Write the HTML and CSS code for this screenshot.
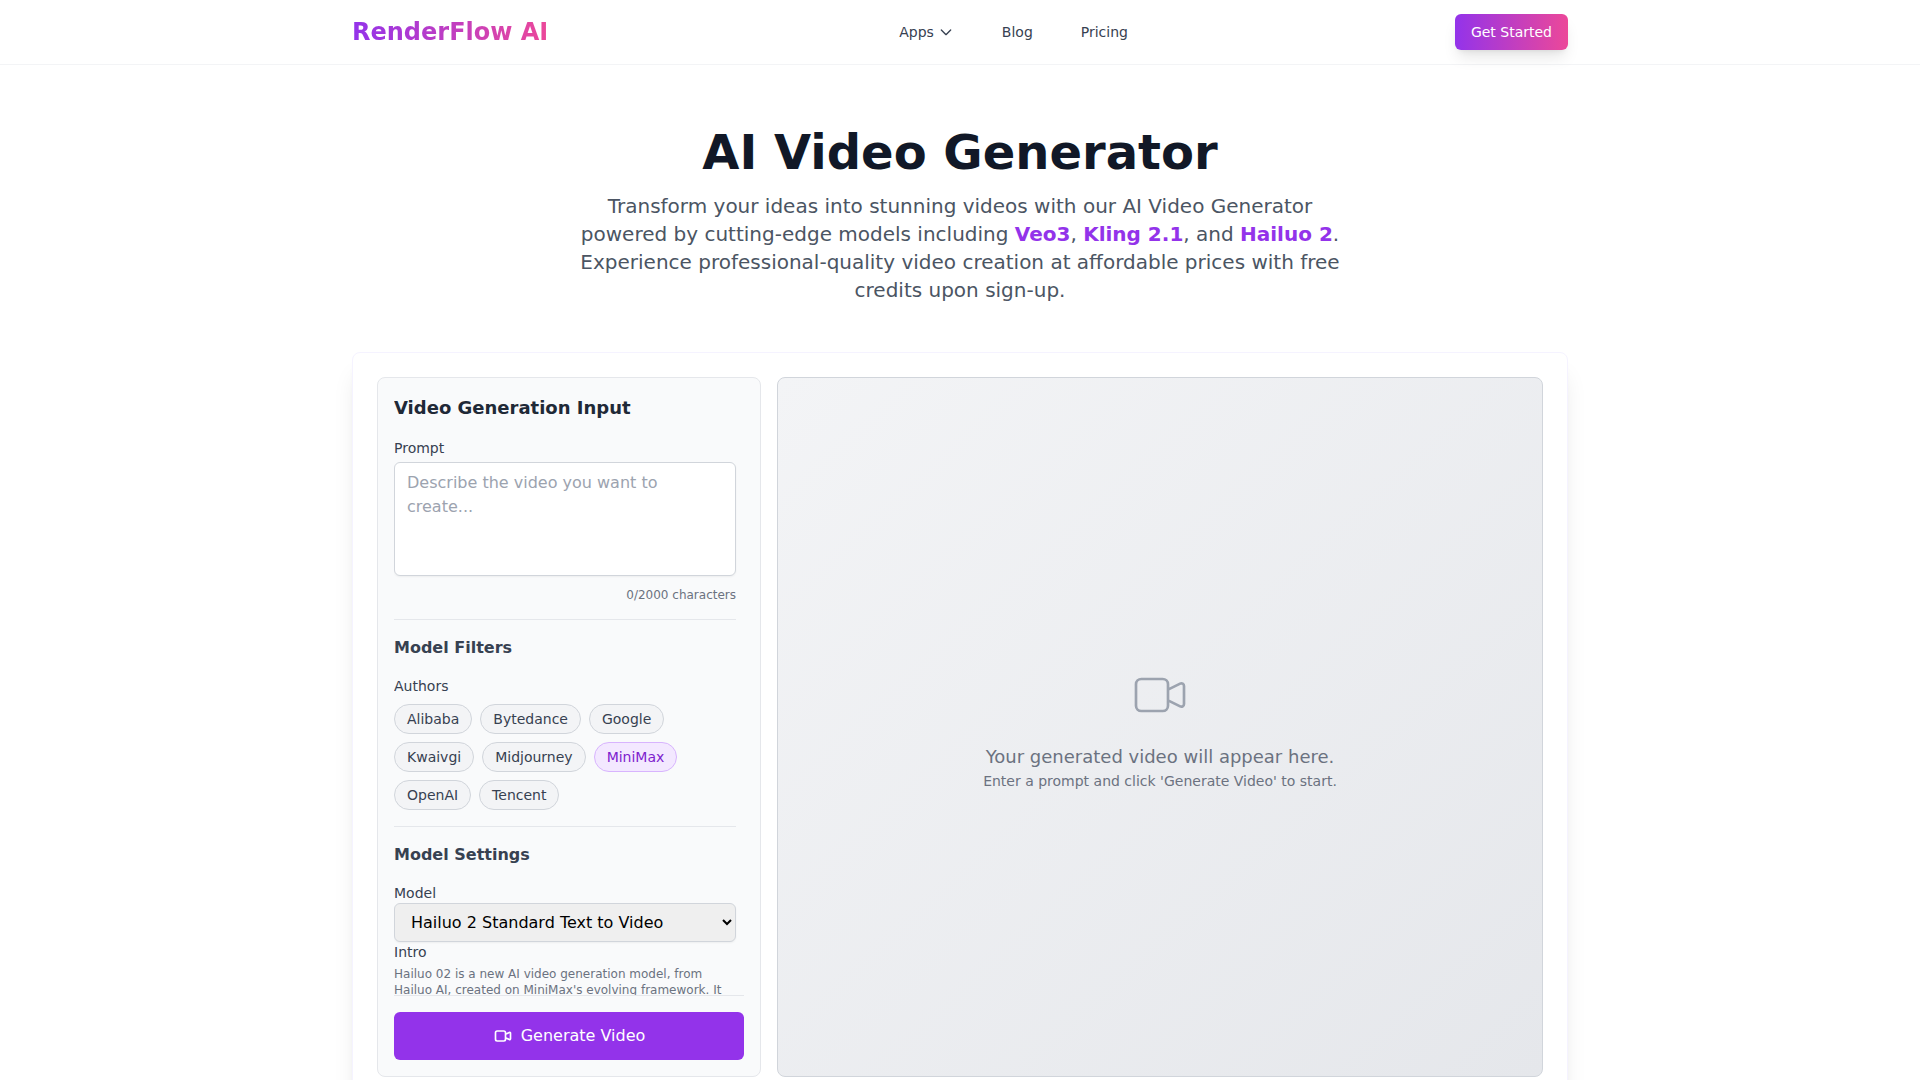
FILE: index.html
```html
<!DOCTYPE html>
<html lang="en">
<head>
  <meta charset="utf-8">
  <meta name="viewport" content="width=device-width, initial-scale=1">
  <title>AI Video Generator | RenderFlow AI</title>
  <link rel="stylesheet" href="styles.css">
</head>
<body>
  <header class="site-header">
    <div class="container site-header-row">
      <a class="logo" href="#">RenderFlow AI</a>
      <nav class="nav" aria-label="Main">
        <button class="nav-link nav-toggle" type="button">
          Apps
          <svg class="icon-sm" viewBox="0 0 24 24" aria-hidden="true"><path d="M19 9l-7 7-7-7"/></svg>
        </button>
        <a class="nav-link" href="#">Blog</a>
        <a class="nav-link" href="#">Pricing</a>
      </nav>
      <button class="get-started" type="button">Get Started</button>
    </div>
  </header>

  <main class="container page">
    <section class="hero">
      <h1 class="hero-title">AI Video Generator</h1>
      <p class="hero-text">Transform your ideas into stunning videos with our AI Video Generator powered by cutting-edge models including <strong>Veo3</strong>, <strong>Kling 2.1</strong>, and <strong>Hailuo 2</strong>. Experience professional-quality video creation at affordable prices with free credits upon sign-up.</p>
    </section>

    <section class="workspace">
      <form class="panel">
        <div class="panel-scroll">
          <h2 class="panel-title">Video Generation Input</h2>
          <label class="label label-spaced" for="prompt">Prompt</label>
          <textarea class="prompt" id="prompt" rows="4" maxlength="2000" placeholder="Describe the video you want to create..."></textarea>
          <p class="counter">0/2000 characters</p>

          <section class="group">
            <h3 class="group-title">Model Filters</h3>
            <p class="label" id="authors">Authors</p>
            <div class="chips" role="group" aria-labelledby="authors">
              <button class="chip" type="button">Alibaba</button>
              <button class="chip" type="button">Bytedance</button>
              <button class="chip" type="button">Google</button>
              <button class="chip" type="button">Kwaivgi</button>
              <button class="chip" type="button">Midjourney</button>
              <button class="chip chip-active" type="button" aria-pressed="true">MiniMax</button>
              <button class="chip" type="button">OpenAI</button>
              <button class="chip" type="button">Tencent</button>
            </div>
          </section>

          <section class="group">
            <h3 class="group-title">Model Settings</h3>
            <label class="label" for="model">Model</label>
            <select class="model" id="model">
              <option>Hailuo 2 Standard Text to Video</option>
            </select>
            <p class="label label-spaced">Intro</p>
            <p class="intro">Hailuo 02 is a new AI video generation model, from Hailuo AI, created on MiniMax's evolving framework. It</p>
          </section>
        </div>
        <div class="panel-footer">
          <button class="generate" type="submit">
            <svg class="icon-md" viewBox="0 0 24 24" aria-hidden="true"><path d="M15 10l4.553-2.276A1 1 0 0121 8.618v6.764a1 1 0 01-1.447.894L15 14M5 18h8a2 2 0 002-2V8a2 2 0 00-2-2H5a2 2 0 00-2 2v8a2 2 0 002 2z"/></svg>
            Generate Video
          </button>
        </div>
      </form>

      <div class="preview">
        <svg class="icon-lg" viewBox="0 0 24 24" aria-hidden="true"><path d="M15 10l4.553-2.276A1 1 0 0121 8.618v6.764a1 1 0 01-1.447.894L15 14M5 18h8a2 2 0 002-2V8a2 2 0 00-2-2H5a2 2 0 00-2 2v8a2 2 0 002 2z"/></svg>
        <p class="preview-title">Your generated video will appear here.</p>
        <p class="preview-text">Enter a prompt and click 'Generate Video' to start.</p>
      </div>
    </section>
  </main>
</body>
</html>
```
FILE: styles.css
```css
*,
*::before,
*::after {
  box-sizing: border-box;
}

body,
h1,
h2,
h3,
p {
  margin: 0;
}

body {
  background: #fff;
  color: #111827;
  font: 16px/24px "DejaVu Sans", sans-serif;
}

button,
select,
textarea {
  margin: 0;
  font: inherit;
}

button {
  cursor: pointer;
}

svg {
  flex: none;
  fill: none;
  stroke: currentColor;
  stroke-width: 2;
  stroke-linecap: round;
  stroke-linejoin: round;
}

.icon-sm {
  width: 16px;
  height: 16px;
}

.icon-md {
  width: 20px;
  height: 20px;
}

.icon-lg {
  width: 64px;
  height: 64px;
  margin-bottom: 16px;
  color: #9ca3af;
  stroke-width: 1;
}

.container {
  max-width: 1280px;
  margin: 0 auto;
  padding: 0 32px;
}

/* Header */
.site-header {
  box-shadow: 0 1px #f3f4f6;
}

.site-header-row {
  display: flex;
  align-items: center;
  justify-content: space-between;
  min-height: 64px;
}

.logo {
  background: linear-gradient(to right, #9333ea, #ec4899);
  background-clip: text;
  -webkit-background-clip: text;
  color: transparent;
  font-size: 24px;
  font-weight: 700;
  line-height: 32px;
  text-decoration: none;
}

.nav {
  display: flex;
  align-items: center;
  gap: 48px;
  padding-left: 24px;
}

.nav-link {
  color: #374151;
  font-size: 14px;
  line-height: 20px;
  text-decoration: none;
}

.nav-toggle {
  display: flex;
  align-items: center;
  gap: 4px;
  padding: 0;
  border: 0;
  background: none;
}

.get-started {
  padding: 8px 16px;
  border: 0;
  border-radius: 6px;
  background: linear-gradient(to right, #9333ea, #ec4899);
  box-shadow: 0 10px 15px -3px rgb(0 0 0 / 0.1), 0 4px 6px -4px rgb(0 0 0 / 0.1);
  color: #fff;
  font-size: 14px;
  line-height: 20px;
}

/* Hero */
.page {
  padding-top: 64px;
  padding-bottom: 64px;
}

.hero {
  margin-bottom: 48px;
  text-align: center;
}

.hero-title {
  margin-bottom: 16px;
  font-size: 48px;
  font-weight: 700;
  line-height: 48px;
}

.hero-text {
  max-width: 768px;
  margin: 0 auto;
  color: #4b5563;
  font-size: 20px;
  line-height: 28px;
}

.hero-text strong {
  color: #9333ea;
}

/* Generator */
.workspace {
  display: grid;
  grid-template-columns: 384px 1fr;
  grid-auto-rows: 700px;
  gap: 16px;
  padding: 24px;
  border: 1px solid #f5f3ff;
  border-radius: 8px;
  background: #fff;
  box-shadow: 0 20px 25px -5px rgb(0 0 0 / 0.1), 0 8px 10px -6px rgb(0 0 0 / 0.1);
}

.panel {
  display: flex;
  flex-direction: column;
  min-width: 0;
  padding: 16px;
  border: 1px solid #e5e7eb;
  border-radius: 8px;
  background: #f9fafb;
}

.panel-scroll {
  flex: 1;
  min-height: 0;
  padding-right: 8px;
  overflow-y: auto;
  scrollbar-width: none;
}

.panel-title {
  margin-bottom: 16px;
  color: #1f2937;
  font-size: 18px;
  line-height: 28px;
}

.label {
  display: block;
  color: #374151;
  font-size: 14px;
  line-height: 20px;
}

.label-spaced {
  margin-bottom: 4px;
}

.prompt {
  display: block;
  width: 100%;
  padding: 8px 12px;
  border: 1px solid #d1d5db;
  border-radius: 6px;
  background: #fff;
  box-shadow: 0 1px 2px rgb(0 0 0 / 0.05);
  resize: none;
}

.prompt::placeholder {
  color: #9ca3af;
}

.counter {
  margin: 11px 0 16px;
  color: #6b7280;
  font-size: 12px;
  line-height: 16px;
  text-align: right;
}

.group {
  padding: 16px 0;
  border-top: 1px solid #e5e7eb;
}

.group-title {
  margin-bottom: 16px;
  color: #374151;
  font-size: 16px;
  line-height: 24px;
}

.chips {
  display: flex;
  flex-wrap: wrap;
  gap: 8px;
  margin-top: 8px;
}

.chip {
  padding: 4px 12px;
  border: 1px solid #d1d5db;
  border-radius: 15px;
  background: #f3f4f6;
  color: #374151;
  font-size: 14px;
  line-height: 20px;
}

.chip-active {
  border-color: #d8b4fe;
  background: #f3e8ff;
  color: #7e22ce;
}

.model {
  display: block;
  width: 100%;
  padding: 8px 12px;
  border: 1px solid #d1d5db;
  border-radius: 6px;
  background-color: #efefef;
  box-shadow: 0 1px 2px rgb(0 0 0 / 0.05);
  color: #000;
}

.intro {
  color: #6b7280;
  font-size: 12px;
  line-height: 16px;
}

.panel-footer {
  padding-top: 16px;
  border-top: 1px solid #e5e7eb;
}

.generate {
  display: flex;
  align-items: center;
  justify-content: center;
  gap: 8px;
  width: 100%;
  padding: 12px 16px;
  border: 0;
  border-radius: 6px;
  background: #9333ea;
  color: #fff;
}

.preview {
  display: flex;
  flex-direction: column;
  align-items: center;
  justify-content: center;
  min-width: 0;
  border: 1px solid #d1d5db;
  border-radius: 8px;
  background: linear-gradient(to bottom right, #f3f4f6, #e5e7eb);
  color: #6b7280;
  text-align: center;
}

.preview-title {
  font-size: 18px;
  line-height: 28px;
}

.preview-text {
  font-size: 14px;
  line-height: 20px;
}

@media (max-width: 900px) {
  .workspace {
    grid-template-columns: 1fr;
  }
}
```
